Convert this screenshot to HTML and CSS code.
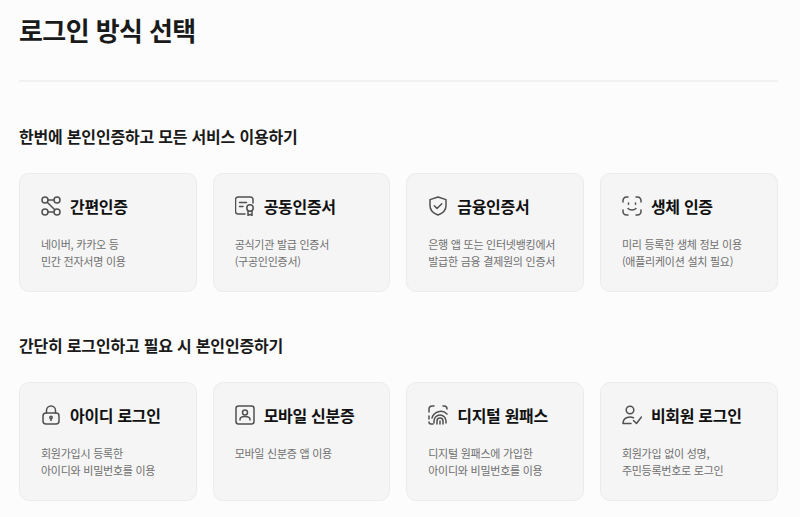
FILE: index.html
```html
<!DOCTYPE html>
<html lang="ko">
<head>
    <meta charset="UTF-8">
    <meta name="viewport" content="width=device-width, initial-scale=1.0">
    <title>로그인 방식 선택</title>
    <link rel="stylesheet" href="styles.css">
</head>
<body>
    <div class="page">
        <h1 class="page-title">로그인 방식 선택</h1>

        <h2 class="section-title">한번에 본인인증하고 모든 서비스 이용하기</h2>
        <div class="cards">
            <div class="card">
                <div class="card-head">
                    <svg class="icon" viewBox="0 0 20 20">
                        <circle cx="4" cy="4" r="3"/><circle cx="16" cy="4" r="3"/>
                        <circle cx="4" cy="16" r="3"/><circle cx="16" cy="16" r="3"/>
                        <path d="M7 4h6M7 16h6M6.200 6.200l7.600 7.600"/>
                    </svg>
                    <span class="card-title">간편인증</span>
                </div>
                <p class="card-desc">네이버, 카카오 등<br>민간 전자서명 이용</p>
            </div>
            <div class="card">
                <div class="card-head">
                    <svg class="icon" viewBox="0 0 20 20">
                        <path d="M10 18H3a2.500 2.500 0 0 1-2.500-2.500V3.500A2.500 2.500 0 0 1 3 1h12.500A2.500 2.500 0 0 1 18 3.500V7"/>
                        <path d="M4.500 6.500h7M4.500 10.500h3.500"/>
                        <circle cx="15" cy="12" r="3.200"/>
                        <path d="M13 14.800v4.700l2-1.200 2 1.200v-4.700"/>
                    </svg>
                    <span class="card-title">공동인증서</span>
                </div>
                <p class="card-desc">공식기관 발급 인증서<br>(구공인인증서)</p>
            </div>
            <div class="card">
                <div class="card-head">
                    <svg class="icon" viewBox="0 0 20 20">
                        <path d="M10 1l8 2.600v6.200c0 4.300-3.300 7.500-8 9.200-4.700-1.700-8-4.900-8-9.200V3.600z"/>
                        <path d="M6.300 9.800l2.700 2.700 4.800-4.800"/>
                    </svg>
                    <span class="card-title">금융인증서</span>
                </div>
                <p class="card-desc">은행 앱 또는 인터넷뱅킹에서<br>발급한 금융 결제원의 인증서</p>
            </div>
            <div class="card">
                <div class="card-head">
                    <svg class="icon" viewBox="0 0 20 20">
                        <path d="M1 6V4.500A3.500 3.500 0 0 1 4.500 1H6M14 1h1.500A3.500 3.500 0 0 1 19 4.500V6M19 14v1.500a3.500 3.500 0 0 1-3.500 3.500H14M6 19H4.500A3.500 3.500 0 0 1 1 15.500V14"/>
                        <path d="M6.500 7v1.200M13.500 7v1.200M6 12.500c2 2 6 2 8 0"/>
                    </svg>
                    <span class="card-title">생체 인증</span>
                </div>
                <p class="card-desc">미리 등록한 생체 정보 이용<br>(애플리케이션 설치 필요)</p>
            </div>
        </div>

        <h2 class="section-title">간단히 로그인하고 필요 시 본인인증하기</h2>
        <div class="cards">
            <div class="card">
                <div class="card-head">
                    <svg class="icon" viewBox="0 0 20 20">
                        <rect x="2" y="8" width="16" height="11" rx="3"/>
                        <path d="M5.500 8V5.500a4.500 4.500 0 0 1 9 0V8"/>
                        <circle cx="10" cy="12.500" r="1.200"/>
                        <path d="M10 13.700v1.800"/>
                    </svg>
                    <span class="card-title">아이디 로그인</span>
                </div>
                <p class="card-desc">회원가입시 등록한<br>아이디와 비밀번호를 이용</p>
            </div>
            <div class="card">
                <div class="card-head">
                    <svg class="icon" viewBox="0 0 20 20">
                        <rect x="1" y="1" width="18" height="18" rx="2.500"/>
                        <circle cx="10" cy="7.500" r="2.500"/>
                        <path d="M5 15v-.500c0-1.800 2.200-3 5-3s5 1.200 5 3v.500"/>
                    </svg>
                    <span class="card-title">모바일 신분증</span>
                </div>
                <p class="card-desc">모바일 신분증 앱 이용</p>
            </div>
            <div class="card">
                <div class="card-head">
                    <svg class="icon" viewBox="0 0 20 20">
                        <path d="M1 7V4a3 3 0 0 1 3-3h2M1 11v3M1 17a2 2 0 0 0 2 2h2M15 1h1a3 3 0 0 1 3 3"/>
                        <path d="M12 19v-3M9 19v-3a3 3 0 0 1 6 0v3M6 18v-2a6 6 0 0 1 12 0v2M4 13a9 9 0 0 1 15-4"/>
                    </svg>
                    <span class="card-title">디지털 원패스</span>
                </div>
                <p class="card-desc">디지털 원패스에 가입한<br>아이디와 비밀번호를 이용</p>
            </div>
            <div class="card">
                <div class="card-head">
                    <svg class="icon" viewBox="0 0 20 20">
                        <circle cx="8" cy="5" r="3.800"/>
                        <path d="M1 18.500v-.500c0-3.500 3-6 7-6 1.300 0 2.500.300 3.500.700M1 18.500h8"/>
                        <path d="M11.500 15.500l3 3 5-6.500"/>
                    </svg>
                    <span class="card-title">비회원 로그인</span>
                </div>
                <p class="card-desc">회원가입 없이 성명,<br>주민등록번호로 로그인</p>
            </div>
        </div>
    </div>
</body>
</html>
```

FILE: styles.css
```css
body {
    font-family: "Noto Sans CJK KR", "Noto Sans", sans-serif;
    background-color: #fcfcfc;
    color: #1a1a1a;
    margin: 0;
}

.page {
    padding: 0 22.5px 0 19px;
    height: 517px;
    overflow: hidden;
}

.page-title {
    font-size: 26px;
    line-height: 40px;
    letter-spacing: -0.6px;
    font-weight: 700;
    margin: 0;
    padding: 10px 0 30px;
    border-bottom: 2px solid #f1f1f1;
}

.section-title {
    font-size: 16px;
    line-height: 24px;
    letter-spacing: -0.2px;
    font-weight: 700;
    margin: 42px 0 25px;
}

.cards {
    display: grid;
    grid-template-columns: repeat(4, 1fr);
    gap: 16px;
}

.section-title + .cards + .section-title {
    margin-top: 41px;
}

.card {
    height: 119px;
    box-sizing: border-box;
    padding: 20px 21px;
    background-color: #f5f5f5;
    border: 1px solid #ececec;
    border-radius: 10px;
}

.card-head {
    display: flex;
    align-items: center;
    gap: 9px;
    height: 24px;
    margin-bottom: 18px;
}

.icon {
    width: 20px;
    height: 20px;
    flex: none;
    fill: none;
    stroke: #505050;
    stroke-width: 1.5;
    stroke-linecap: round;
    stroke-linejoin: round;
}

.card-title {
    font-size: 16px;
    letter-spacing: -0.3px;
    font-weight: 700;
    color: #111;
}

.card-desc {
    font-size: 11px;
    line-height: 17px;
    letter-spacing: -0.25px;
    color: #6f6f6f;
    margin: 0;
}
```
